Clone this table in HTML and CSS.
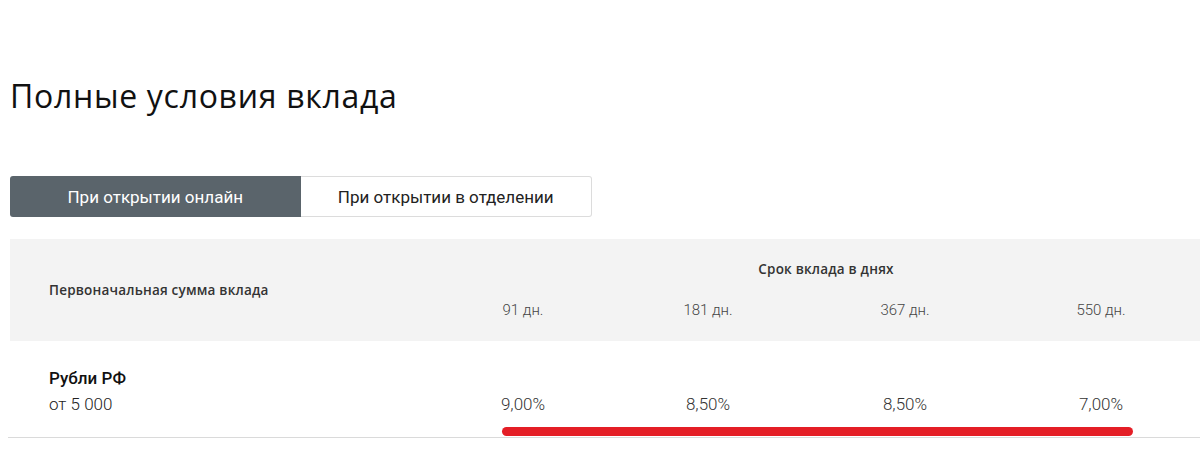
FILE: index.html
```html
<!DOCTYPE html>
<html lang="ru">
<head>
<meta charset="utf-8">
<link rel="stylesheet" href="styles.css">
</head>
<body>
<main class="page">
  <h1 class="title">Полные условия вклада</h1>
  <div class="tabs">
    <div class="tab tab-active">При открытии онлайн</div>
    <div class="tab">При открытии в отделении</div>
  </div>
  <section class="rates">
    <div class="rates-head">
      <div class="head-label">Первоначальная сумма вклада</div>
      <div class="head-term">Срок вклада в днях</div>
      <div class="term">91 дн.</div>
      <div class="term">181 дн.</div>
      <div class="term">367 дн.</div>
      <div class="term">550 дн.</div>
    </div>
    <div class="rates-row">
      <div class="row-label">
        <div class="currency">Рубли РФ</div>
        <div class="amount">от 5 000</div>
      </div>
      <div class="rate">9,00%</div>
      <div class="rate">8,50%</div>
      <div class="rate">8,50%</div>
      <div class="rate">7,00%</div>
      <div class="marker"></div>
    </div>
  </section>
</main>
</body>
</html>
```

FILE: styles.css
```css
html, body {
  margin: 0;
  padding: 0;
  background: #ffffff;
}

.page {
  padding: 0 0 0 10px;
  font-family: Roboto, "Liberation Sans", sans-serif;
  color: #333;
}

.title {
  margin: 0;
  padding-top: 76px;
  font-family: "Open Sans", Lato, sans-serif;
  font-weight: 400;
  font-size: 32px;
  line-height: 40px;
  color: #111;
  letter-spacing: 0.7px;
}

.tabs {
  display: flex;
  margin-top: 60px;
  width: 582px;
  height: 41px;
}

.tab {
  flex: 1;
  display: flex;
  align-items: center;
  justify-content: center;
  font-size: 17px;
  color: #222;
  border: 1px solid #dcdcdc;
  border-left: none;
  border-radius: 0 3px 3px 0;
  box-sizing: border-box;
}

.tab-active {
  background: #5a646b;
  color: #fff;
  border: none;
  border-radius: 3px 0 0 3px;
}

.rates {
  margin-top: 22px;
}

.rates-head,
.rates-row {
  display: grid;
  grid-template-columns: 421px 184px 186px 208px 184px 7px;
}

.rates-head {
  background: #f3f3f3;
  height: 102px;
  grid-template-rows: 60px 42px;
}

.head-label {
  grid-column: 1;
  grid-row: 1 / span 2;
  align-self: center;
  padding-left: 39px;
  font-family: "Open Sans", Lato, sans-serif;
  font-weight: 600;
  font-size: 13.5px;
  color: #333;
  letter-spacing: 0.2px;
}

.head-term {
  grid-column: 2 / span 4;
  grid-row: 1;
  align-self: center;
  justify-self: center;
  padding-left: 28px;
  font-family: "Open Sans", Lato, sans-serif;
  font-weight: 600;
  font-size: 13.5px;
  color: #333;
  letter-spacing: 0.2px;
}

.term {
  grid-row: 2;
  text-align: center;
  align-self: start;
  padding-top: 2px;
  font-size: 15px;
  font-weight: 300;
  color: #444;
}

.rates-row {
  position: relative;
  height: 96px;
  border-bottom: 1px solid #dadada;
  margin-left: -2px;
  padding-left: 2px;
}

.row-label {
  align-self: center;
  padding-left: 39px;
  padding-top: 4px;
}

.currency {
  font-size: 17px;
  font-weight: 500;
  color: #111;
  line-height: 26px;
}

.amount {
  font-size: 17px;
  font-weight: 300;
  color: #222;
  line-height: 26px;
}

.rate {
  align-self: center;
  text-align: center;
  padding-top: 30px;
  font-size: 17px;
  font-weight: 300;
  color: #333;
}

.marker {
  position: absolute;
  left: 494px;
  top: 86px;
  width: 631px;
  height: 9px;
  border-radius: 5px;
  background: #e41e26;
}
```
